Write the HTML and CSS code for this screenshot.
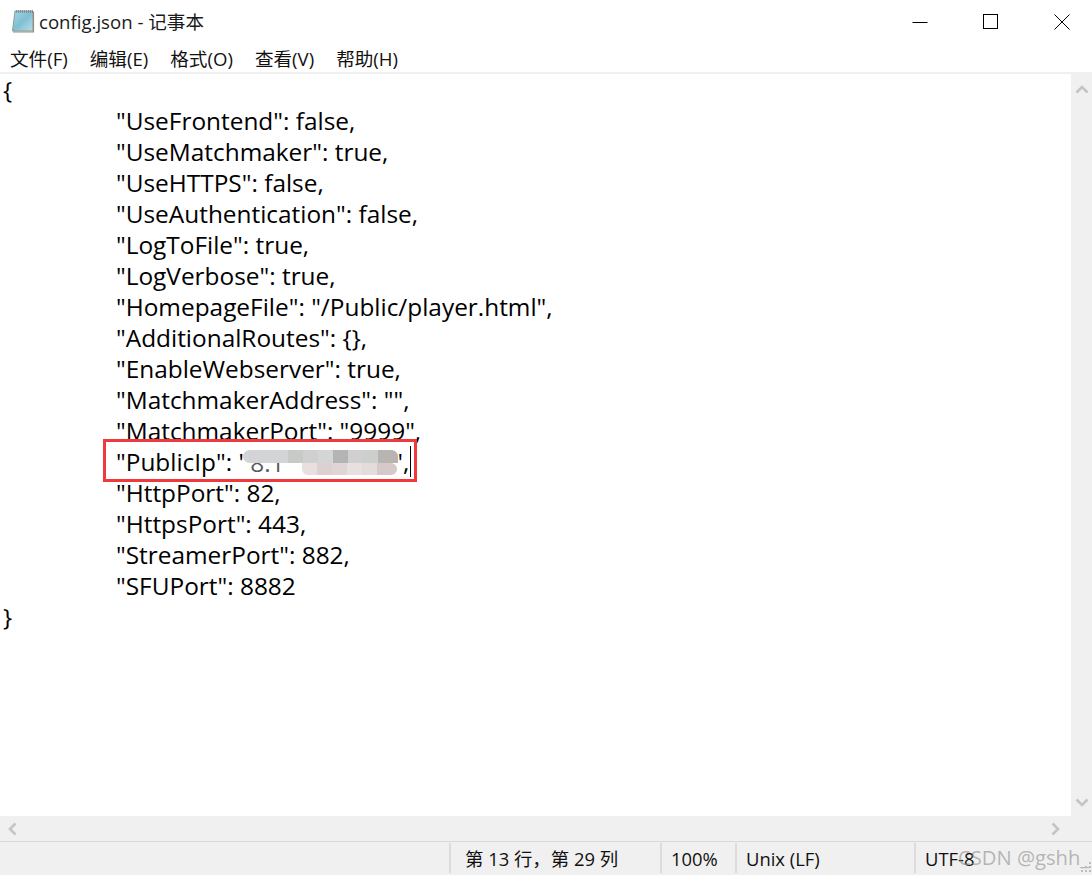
FILE: index.html
```html
<!DOCTYPE html>
<html lang="zh-CN">
<head>
<meta charset="utf-8">
<title>config.json - 记事本</title>
<link rel="stylesheet" href="styles.css">
</head>
<body>
<div class="window">
  <header class="titlebar">
    <svg class="app-icon" width="24" height="26" viewBox="0 0 24 26">
      <defs><linearGradient id="pad" x1="0" y1="0" x2="1" y2="1"><stop offset="0" stop-color="#a9d6e4"/><stop offset="0.5" stop-color="#7fc0d2"/><stop offset="1" stop-color="#b9dfe6"/></linearGradient></defs>
      <path d="M4 3H22V23H1.500Z" fill="url(#pad)" stroke="#8a9aa0" stroke-width="1"/>
      <path d="M22.500 4V24H2" fill="none" stroke="#9c8f78" stroke-width="1.200"/>
      <path d="M5 3.500H22" stroke="#77858c" stroke-width="2.500" stroke-dasharray="1 1"/>
    </svg>
    <span class="title">config.json - 记事本</span>
    <div class="controls">
      <svg width="16" height="16" viewBox="0 0 16 16"><path d="M0.500 8.500H15.500" stroke="#000" fill="none"/></svg>
      <svg width="16" height="16" viewBox="0 0 16 16"><rect x="0.500" y="0.500" width="14" height="14" stroke="#000" fill="none"/></svg>
      <svg width="16" height="16" viewBox="0 0 16 16"><path d="M0.500 0.500L15.500 15.500M15.500 0.500L0.500 15.500" stroke="#000" fill="none"/></svg>
    </div>
  </header>
  <nav class="menubar">
    <span>文件(F)</span><span>编辑(E)</span><span>格式(O)</span><span>查看(V)</span><span>帮助(H)</span>
  </nav>
  <div class="middle">
    <main class="editor">
      <div class="line">{</div>
      <div class="line tab">"UseFrontend": false,</div>
      <div class="line tab">"UseMatchmaker": true,</div>
      <div class="line tab">"UseHTTPS": false,</div>
      <div class="line tab">"UseAuthentication": false,</div>
      <div class="line tab">"LogToFile": true,</div>
      <div class="line tab">"LogVerbose": true,</div>
      <div class="line tab">"HomepageFile": "/Public/player.html",</div>
      <div class="line tab">"AdditionalRoutes": {},</div>
      <div class="line tab">"EnableWebserver": true,</div>
      <div class="line tab">"MatchmakerAddress": "",</div>
      <div class="line tab">"MatchmakerPort": "9999",</div>
      <div class="line tab">"PublicIp": "<span class="mosaic"><span class="hidden-ip">8.1</span><span class="mrow top"><i class="c1"></i><i class="c1"></i><i class="c1"></i><i class="c2"></i><i class="c3"></i><i class="c4"></i><i class="c5"></i><i class="c3"></i><i class="c6"></i><i class="c7"></i></span><span class="mrow bottom"><i class="d1"></i><i class="d2"></i><i class="d3"></i><i class="d1"></i><i class="d4"></i><i class="d5"></i></span></span>",<span class="caret"></span><span class="redbox"></span></div>
      <div class="line tab">"HttpPort": 82,</div>
      <div class="line tab">"HttpsPort": 443,</div>
      <div class="line tab">"StreamerPort": 882,</div>
      <div class="line tab">"SFUPort": 8882</div>
      <div class="line">}</div>
    </main>
    <aside class="vscroll">
      <svg width="14" height="10" viewBox="0 0 14 10"><path d="M1.500 8.500L7 3L12.500 8.500" fill="none" stroke="#c4c4c4" stroke-width="2.600"/></svg>
      <svg width="14" height="10" viewBox="0 0 14 10"><path d="M1.500 1.500L7 7L12.500 1.500" fill="none" stroke="#c4c4c4" stroke-width="2.600"/></svg>
    </aside>
  </div>
  <div class="hscroll">
    <svg width="10" height="14" viewBox="0 0 10 14"><path d="M8.500 1.500L3 7L8.500 12.500" fill="none" stroke="#c4c4c4" stroke-width="2.600"/></svg>
    <svg width="10" height="14" viewBox="0 0 10 14"><path d="M1.500 1.500L7 7L1.500 12.500" fill="none" stroke="#c4c4c4" stroke-width="2.600"/></svg>
  </div>
  <footer class="statusbar">
    <span class="cell pos">第 13 行，第 29 列</span>
    <span class="cell zoom">100%</span>
    <span class="cell eol">Unix (LF)</span>
    <span class="cell enc">UTF-8</span>
    <span class="watermark">CSDN @gshh_</span>
    <svg class="grip" width="12" height="12" viewBox="0 0 12 12"><path d="M9 1h2v2H9zM5 5h2v2H5zM9 5h2v2H9zM1 9h2v2H1zM5 9h2v2H5zM9 9h2v2H9z" fill="#bdbdbd"/></svg>
  </footer>
</div>
</body>
</html>
```
FILE: styles.css
```css
* { box-sizing: border-box; }
html, body { margin: 0; height: 100%; overflow: hidden; }
body { background: #fff; color: #000; font-family: "Open Sans", "Noto Sans CJK SC", sans-serif; }
.window { display: flex; flex-direction: column; width: 1092px; height: 875px; }

.titlebar { display: flex; align-items: center; height: 44px; padding-left: 11px; flex: none; }
.app-icon { flex: none; margin-top: -2px; }
.title { margin-left: 4px; margin-top: -3px; font-size: 18.6px; color: #1a1a1a; }
.controls { margin-left: auto; display: flex; gap: 55px; padding-right: 22px; align-items: center; }

.menubar { display: flex; height: 26px; margin-bottom: 2px; flex: none; gap: 22px; padding-left: 10px; font-size: 18.6px; align-items: center; color: #111; }

.middle { display: flex; flex: 1; min-height: 0; border-top: 2px solid #f0f0f0; }
.editor { flex: 1; font-size: 24.4px; overflow: hidden; }
.line { height: 31px; line-height: 31px; padding-left: 3px; position: relative; white-space: pre; }
.tab { padding-left: 116px; }
.vscroll { width: 21px; background: #f0f0f0; display: flex; flex-direction: column; justify-content: space-between; align-items: center; padding: 10px 0 8px; flex: none; }

.hscroll { height: 25px; flex: none; background: #f0f0f0; display: flex; justify-content: space-between; align-items: center; padding: 0 31px 0 7px; }

.statusbar { height: 34px; flex: none; background: #f0f0f0; border-top: 1px solid #d8d8d8; display: flex; font-size: 18.4px; position: relative; color: #111; padding: 1px 0 2px 449px; }
.cell { border-left: 2px solid #dcdcdc; padding-left: 14px; display: flex; align-items: center; white-space: pre; }
.pos { width: 211px; }
.zoom { width: 75px; padding-left: 9px; }
.eol { width: 179px; padding-left: 9px; }
.enc { flex: 1; padding-left: 9px; }
.watermark { position: absolute; left: 958px; top: 1px; font-size: 20.2px; color: rgba(140, 140, 140, 0.6); white-space: pre; }
.grip { position: absolute; right: 0; bottom: 2px; }

.mosaic { display: inline-block; width: 150px; height: 25px; margin-left: -5px; vertical-align: -4px; position: relative; }
.hidden-ip { position: absolute; left: 7px; top: -3px; line-height: 31px; color: #5a5a5a; }
.mrow { position: absolute; display: flex; }
.mrow i { display: block; flex: none; width: 15px; height: 100%; }
.top { left: 0; top: 0; width: 155px; height: 13px; border-radius: 7px 7px 0 7px; overflow: hidden; }
.bottom { left: 59px; top: 13px; height: 12px; border-radius: 0 6px 6px 6px; overflow: hidden; }
.c1 { background: #d3d4d6; }
.c2 { background: #c8cac8; }
.c3 { background: #d0d0d0; }
.c4 { background: #d4d6d6; }
.c5 { background: #b4b4b4; }
.c6 { background: #ccd0cc; }
.mrow .c7 { background: #b8b4b2; width: 20px; }
.d1 { background: #e8e0e0; }
.d2 { background: #dcd0d0; }
.d3 { background: #e0d4d4; }
.d4 { background: #e4dcdc; }
.mrow .d5 { background: #d5c9c9; width: 20px; }

.caret { display: inline-block; width: 1px; height: 31px; background: #000; vertical-align: -6px; margin-left: 1px; }
.redbox { position: absolute; left: 103px; top: -7px; width: 314px; height: 43px; border: 3px solid #ee3a3c; }
```
